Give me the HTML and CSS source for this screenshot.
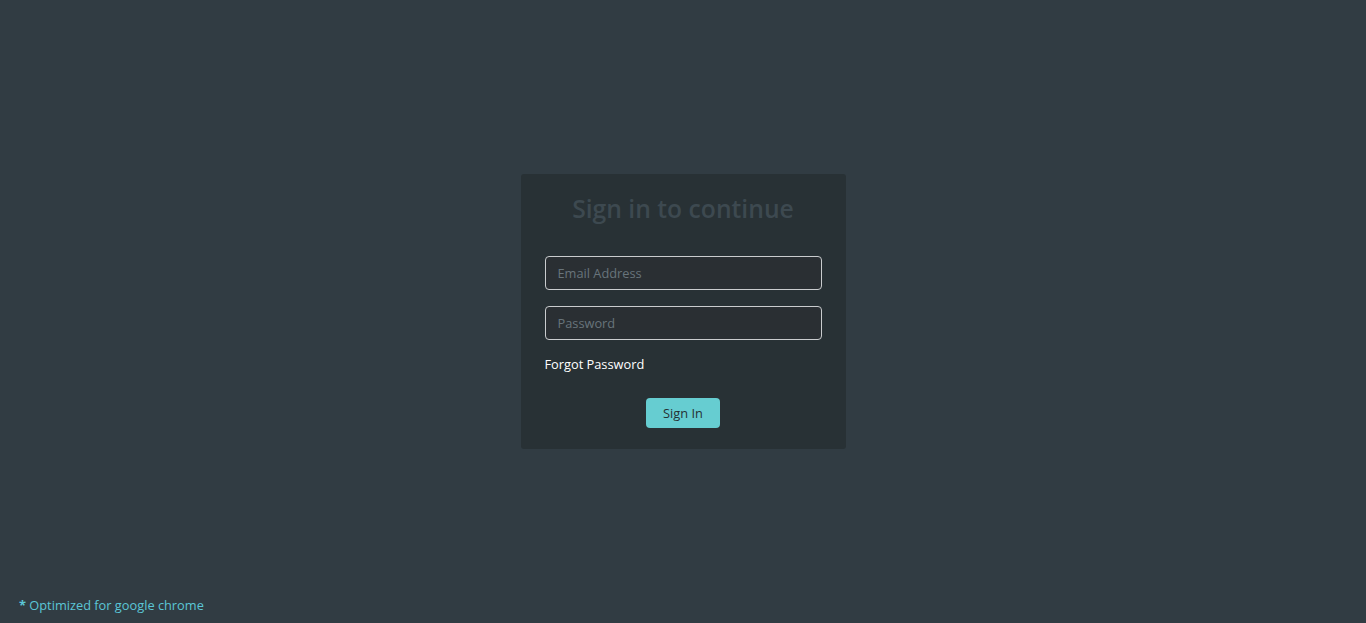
FILE: index.html
```html
<!DOCTYPE html>
<html lang="en">
<head>
<meta charset="utf-8">
<title>Sign in</title>
<link rel="stylesheet" href="styles.css">
</head>
<body>
<div class="top"></div>
<main class="card">
  <h1 class="title">Sign in to continue</h1>
  <form class="form">
    <input class="field" type="email" placeholder="Email Address">
    <input class="field" type="password" placeholder="Password">
    <a class="forgot" href="#">Forgot Password</a>
    <div class="actions"><button class="btn" type="button">Sign In</button></div>
  </form>
</main>
<footer class="bottom">
  <p class="note"><span class="star">*</span> Optimized for google chrome</p>
</footer>
</body>
</html>
```
FILE: styles.css
```css
html, body {
  margin: 0;
  padding: 0;
  height: 100%;
}
body {
  background: #313c43;
  font-family: "Open Sans", "Noto Sans", sans-serif;
  display: grid;
  grid-template-rows: 1fr auto 1fr;
  justify-items: center;
  min-height: 100vh;
}
.card {
  width: 325px;
  box-sizing: border-box;
  background: #283135;
  border-radius: 3px;
  padding: 17px 24px 21px;
}
.title {
  margin: 0;
  text-align: center;
  font-size: 24.7px;
  font-weight: 600;
  line-height: 36px;
  color: #3d4950;
}
.form {
  display: flex;
  flex-direction: column;
  margin-top: 29px;
}
.field {
  box-sizing: border-box;
  height: 34px;
  width: 100%;
  background: #2a2f33;
  border: 1px solid #c9ccce;
  border-radius: 4px;
  padding: 0 12px;
  font-family: inherit;
  font-size: 12.8px;
  color: #ddd;
  margin-bottom: 16px;
  outline: none;
}
.field::placeholder {
  color: #68747b;
}
.forgot {
  margin-top: -1px;
  color: #ffffff;
  text-decoration: none;
  font-size: 12.8px;
  line-height: 18px;
}
.actions {
  display: flex;
  justify-content: center;
  margin-top: 25px;
}
.btn {
  width: 74px;
  height: 30px;
  background: #66cdd1;
  border: none;
  border-radius: 4px;
  font-family: inherit;
  font-size: 12.8px;
  color: #253034;
  padding: 0;
  cursor: pointer;
}
.bottom {
  justify-self: stretch;
  align-self: end;
  padding: 0 0 9px 19px;
}
.note {
  margin: 0;
  font-size: 12.8px;
  line-height: 18px;
  color: #5bc6d6;
}
.star {
  font-weight: 700;
}
```
